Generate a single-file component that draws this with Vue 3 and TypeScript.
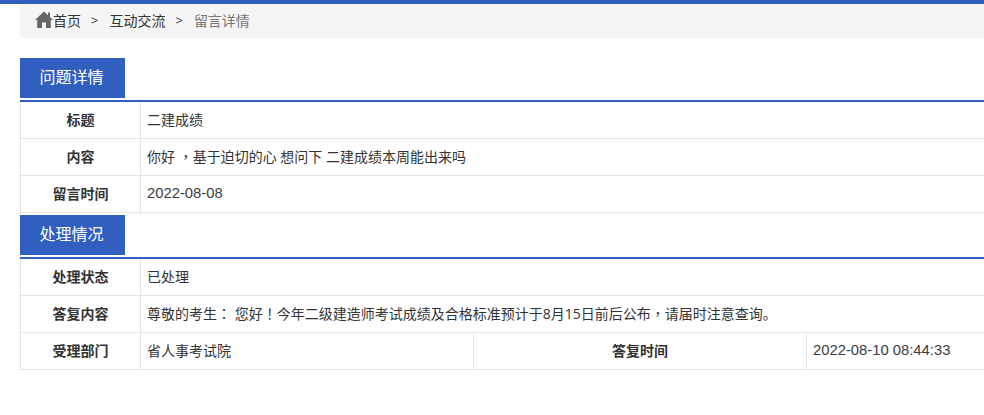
<script setup lang="ts">
interface Cell { text: string; head?: boolean; num?: boolean }
const crumbs: string[] = ['互动交流']
const detail: { label: string; value: string; num?: boolean }[] = [
  { label: '标题', value: '二建成绩' },
  { label: '内容', value: '你好 ，基于迫切的心 想问下 二建成绩本周能出来吗' },
  { label: '留言时间', value: '2022-08-08', num: true },
]
const handling: { label: string; value: string }[] = [
  { label: '处理状态', value: '已处理' },
  { label: '答复内容', value: '尊敬的考生： 您好！今年二级建造师考试成绩及合格标准预计于8月15日前后公布，请届时注意查询。' },
]
const last: Cell[] = [
  { text: '受理部门', head: true },
  { text: '省人事考试院' },
  { text: '答复时间', head: true },
  { text: '2022-08-10 08:44:33', num: true },
]
// Full-width punctuation sits centred in its box in the reference.
const split = (s: string): string[] => s.split(/([，！：])/).filter(Boolean)
const isPunct = (s: string): boolean => /^[，！：]$/.test(s)
</script>

<template>
  <div class="page">
    <nav class="crumbs">
      <svg class="home" viewBox="0 0 18 17" width="18" height="17" aria-hidden="true">
        <path d="M13 1.5 H15 V6 L18 9 H15.8 V17 H11 V11.5 H7 V17 H2.2 V9 H0 L9 0.5 L13 4.2 Z" fill="#666" />
      </svg>
      <a class="crumb">首页</a>
      <span class="sep">&gt;</span>
      <a v-for="c in crumbs" :key="c" class="crumb">{{ c }}</a>
      <span class="sep">&gt;</span>
      <span class="current">留言详情</span>
    </nav>

    <section class="first">
      <div class="title-bar"><h2 class="title">问题详情</h2></div>
      <div v-for="r in detail" :key="r.label" class="row">
        <div class="cell head">{{ r.label }}</div>
        <div class="cell value" :class="{ num: r.num }">
          <span class="text"><span v-for="(s, i) in split(r.value)" :key="i" :class="{ punct: isPunct(s) }">{{ s }}</span></span>
        </div>
      </div>
    </section>

    <section class="second">
      <div class="title-bar"><h2 class="title">处理情况</h2></div>
      <div v-for="r in handling" :key="r.label" class="row">
        <div class="cell head">{{ r.label }}</div>
        <div class="cell value">
          <span class="text"><span v-for="(s, i) in split(r.value)" :key="i" :class="{ punct: isPunct(s) }">{{ s }}</span></span>
        </div>
      </div>
      <div class="row four">
        <div v-for="c in last" :key="c.text" class="cell" :class="[c.head ? 'head' : 'value', { num: c.num }]">{{ c.text }}</div>
      </div>
    </section>
  </div>
</template>

<style>
html, body { margin: 0; overflow: hidden; background: #fff; }
</style>

<style scoped>
.page {
  width: 1140px;
  padding: 0 0 0 20px;
  border-top: 4px solid #315fc0;
  font-family: "Open Sans", "Noto Sans CJK SC", sans-serif;
  font-size: 14px;
  color: #333;
}
.crumbs {
  display: flex;
  align-items: center;
  height: 34px;
  padding: 0 0 2px 15px;
  box-sizing: border-box;
  background: #f5f5f5;
  border-radius: 4px;
}
.home { margin-bottom: 1px; flex: none; }
.crumb { color: #333; }
.sep { margin: 0 11px 0 10px; color: #333; font-size: 13px; }
.current { color: #777; }
.first { margin-top: 20px; }
.title-bar {
  height: 42px;
  border-bottom: 2px solid #315fc0;
}
.second .title-bar { margin-top: 2px; }
.title {
  margin: 0;
  width: 105px;
  height: 40px;
  box-sizing: border-box;
  padding-right: 2px;
  line-height: 38px;
  text-align: center;
  background: #315fc0;
  color: #fff;
  font-size: 16px;
  font-weight: 400;
}
.row {
  display: grid;
  grid-template-columns: 120px 1fr;
  height: 37px;
  box-sizing: border-box;
  border-left: 1px solid #e5e5e5;
  border-bottom: 1px solid #e5e5e5;
}
.row.four { grid-template-columns: 120px 333px 333px 1fr; }
.cell {
  display: flex;
  align-items: center;
  padding: 0 6px 2px;
  border-right: 1px solid #e5e5e5;
  white-space: nowrap;
}
.head {
  justify-content: center;
  font-weight: 700;
}
.text { white-space: pre; }
.punct { font-family: "Noto Sans CJK TC", sans-serif; }
.num { font-family: "Liberation Sans", sans-serif; font-size: 14.8px; color: #3c3c3c; }
</style>
